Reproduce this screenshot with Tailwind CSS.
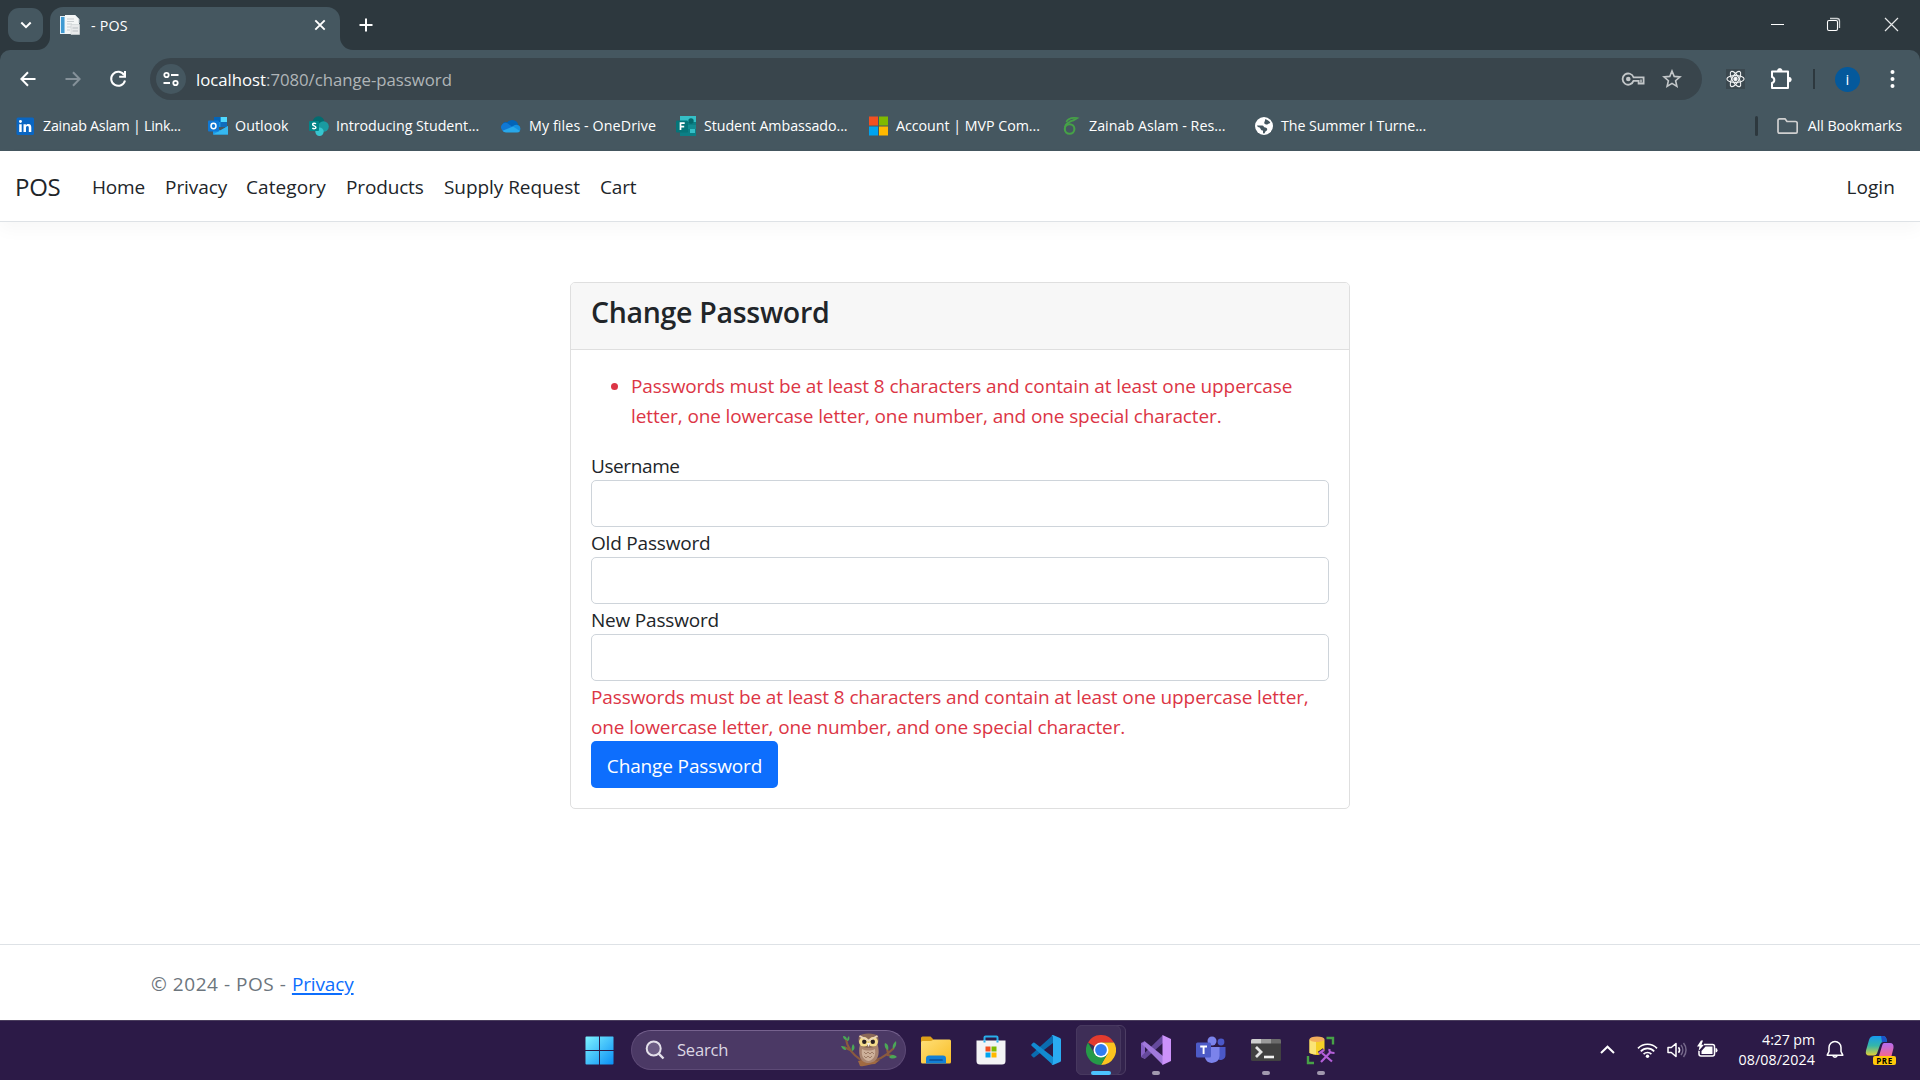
<!DOCTYPE html>
<html lang="en">
<head>
<meta charset="utf-8">
<title>- POS</title>
<script src="https://cdn.jsdelivr.net/npm/@tailwindcss/browser@4"></script>
</head>
<body class="h-[1080px] w-[1920px] overflow-hidden bg-white font-['Open_Sans',sans-serif] text-[#212529]">
<div class="flex h-full flex-col">

<!-- Browser chrome -->
<header class="flex h-[151px] shrink-0 flex-col bg-[#2d383e] text-white">
  <!-- Tab strip -->
  <div class="flex h-[50px] shrink-0 items-start pl-2">
    <button class="mt-2 flex h-[34px] w-[35px] items-center justify-center rounded-[11px] bg-[#455760]">
      <svg class="h-[12px] w-[12px]" viewBox="0 0 12 12" fill="none" stroke="#fff" stroke-width="2"><path d="M1.3 3.5 6 8.2l4.7-4.7"/></svg>
    </button>
    <div class="relative mt-[7px] ml-[7px] flex h-[43px] w-[290px] items-center rounded-t-[13px] bg-[#455760] pr-[13px] pb-[7px] pl-[10px]">
      <svg class="absolute bottom-0 -left-[13px] h-[13px] w-[13px]" viewBox="0 0 13 13"><path d="M13 0v13H0A13 13 0 0 0 13 0Z" fill="#455760"/></svg>
      <svg class="absolute -right-[13px] bottom-0 h-[13px] w-[13px]" viewBox="0 0 13 13"><path d="M0 0v13h13A13 13 0 0 1 0 0Z" fill="#455760"/></svg>
      <svg class="h-5 w-5" viewBox="0 0 20 20"><path d="M0 1h5v18H0Z" fill="#dfeef8"/><path d="M1 2h3.5v16H1Z" fill="#3f9ad2"/><path d="M5 0h10l4 4v15H5Z" fill="#f4f6f6"/><path d="M15 0l4 4v4" fill="none" stroke="#c3cdd2"/><path d="M7 4h7M7 6.5h7M7 9h5M7 12h4M7 15h3" stroke="#c9ced1"/><path d="M11 9.5h8.500v10H11Z" fill="#e8eaeb" stroke="#cfd4d6" stroke-width=".7"/><path d="M12.500 13h5.500M12.500 16h5.500" stroke="#b9bfc3"/></svg>
      <span class="ml-[11px] pt-px text-[14.25px] leading-5 tracking-[0.2px]">- POS</span>
      <svg class="ml-auto h-[14px] w-[14px]" viewBox="0 0 14 14" stroke="#fff" stroke-width="1.900"><path d="M2.300 2.300l9.400 9.400M11.700 2.300l-9.400 9.400"/></svg>
    </div>
    <svg class="mt-[18px] ml-[19px] h-[14px] w-[14px]" viewBox="0 0 14 14" stroke="#fff" stroke-width="2"><path d="M7 .5v13M.5 7h13"/></svg>
    <div class="ml-auto flex items-center pt-[17px] pr-[21px]">
      <svg class="h-[15px] w-[15px]" viewBox="0 0 15 15" stroke="#fff"><path d="M1 7.500h13"/></svg>
      <svg class="ml-[41px] h-[15px] w-[15px]" viewBox="0 0 15 15" fill="none" stroke="#fff" stroke-width="1.100"><rect x="1.500" y="3.500" width="10" height="10" rx="1.500"/><path d="M4 1.500h7A2.500 2.500 0 0 1 13.500 4v7" stroke="#c9cdcf" stroke-width="1.300"/></svg>
      <svg class="ml-[43px] h-[15px] w-[15px]" viewBox="0 0 15 15" stroke="#e6e8e9" stroke-width="1.200"><path d="M1 1l13 13M14 1 1 14"/></svg>
    </div>
  </div>

  <!-- Toolbar -->
  <div class="flex h-[101px] flex-col rounded-t-[10px] bg-[#455760]">
    <div class="flex h-[50px] shrink-0 items-end pl-[20px]">
      <div class="flex h-[42px] items-center">
        <svg class="h-[16px] w-[16px]" viewBox="0 0 16 16" fill="none" stroke="#fff" stroke-width="2"><path d="M15.500 8H1.500M8 1.200 1.400 8 8 14.800"/></svg>
        <svg class="ml-[29px] h-[16px] w-[16px]" viewBox="0 0 16 16" fill="none" stroke="#859199" stroke-width="2"><path d="M.5 8h14M8 1.200 14.600 8 8 14.800"/></svg>
        <svg class="ml-[28px] h-[18px] w-[18px]" viewBox="0 0 18 18" fill="none" stroke="#fff" stroke-width="2"><path d="M15.200 5.200A7 7 0 1 0 16 10.500"/><path d="M16 1v5.800h-5.800"/></svg>
      </div>
      <div class="ml-[23px] flex h-[42px] w-[1552px] items-center rounded-full bg-[#39454c] pr-[20px] pl-[6px]">
        <div class="flex h-[30px] w-[30px] items-center justify-center rounded-full bg-[#455760]">
          <svg class="h-[16px] w-[16px]" viewBox="0 0 16 16" fill="none" stroke="#fff" stroke-width="1.800"><circle cx="3.500" cy="4" r="2.200"/><path d="M8 4h7.500M.5 12H7"/><circle cx="12.500" cy="12" r="2.200"/></svg>
        </div>
        <span class="ml-[10px] pt-px text-[16.75px] tracking-[-0.02px] text-[#b0b5b8]"><span class="text-white">localhost</span>:7080/change-password</span>
        <svg class="ml-auto h-[24px] w-[24px]" viewBox="0 0 24 24" fill="none" stroke="#c3c7c9" stroke-width="1.800"><path d="M12.500 10.300H22.600v6.200H17.600v-2.600h-5.100A5.600 5.600 0 1 1 12.500 10.300Z"/><path d="M20 12.500v3" stroke-width="1.500"/><circle cx="7.300" cy="12" r="2.300" fill="#c3c7c9" stroke="none"/></svg>
        <svg class="ml-[17px] h-[20px] w-[20px]" viewBox="0 0 20 20" fill="none" stroke="#c3c7c9" stroke-width="1.600"><path d="M10 2l2.200 5.400 5.800.5-4.400 3.800 1.300 5.700L10 14.400l-4.900 3 1.300-5.700L2 7.900l5.800-.5Z"/></svg>
      </div>
      <div class="flex h-[42px] items-center pl-[24px]">
        <div class="flex h-[20px] w-[19px] items-center justify-center bg-[#3b484f]">
          <svg class="h-[18px] w-[19px]" viewBox="0 0 19 18" fill="none" stroke="#f0f2f3" stroke-width="1.100"><ellipse cx="9.500" cy="9" rx="8.600" ry="3.400"/><ellipse cx="9.500" cy="9" rx="8.600" ry="3.400" transform="rotate(60 9.500 9)"/><ellipse cx="9.500" cy="9" rx="8.600" ry="3.400" transform="rotate(120 9.500 9)"/><circle cx="9.500" cy="9" r="1.600" fill="#fff"/></svg>
        </div>
        <svg class="ml-[25px] h-[22px] w-[22px]" viewBox="0 0 22 22" fill="none" stroke="#fff" stroke-width="2" stroke-linejoin="round"><path d="M2 3.500h16v16.500H2v-5a3.100 3.100 0 0 0 0-6Z"/><path d="M7.500 2.800a2.300 2.300 0 0 1 4.600 0ZM19 9.300a2.300 2.300 0 0 1 0 4.600Z" fill="#fff" stroke-width=".8"/></svg>
        <div class="ml-[21px] h-[20px] w-[2px] bg-[#2d383e]"></div>
        <div class="ml-[20px] flex h-[25px] w-[25px] items-center justify-center rounded-full bg-[#04599c] text-[15px] leading-none">i</div>
        <svg class="ml-[30px] h-[20px] w-[5px]" viewBox="0 0 5 20" fill="#fff"><circle cx="2.500" cy="3" r="2"/><circle cx="2.500" cy="10" r="2"/><circle cx="2.500" cy="17" r="2"/></svg>
      </div>
    </div>

    <!-- Bookmarks bar -->
    <div class="flex h-[51px] items-center pl-[15px] text-[14.25px] whitespace-nowrap">
      <div class="flex w-[193px] items-center gap-2">
        <svg class="h-5 w-5" viewBox="0 0 20 20"><rect x="1.500" y="1.500" width="17.500" height="17.500" rx="1.500" fill="#0a66c2"/><path d="M4.200 8.200h2.500V16H4.200ZM8.500 8.200h2.400v1.100c.5-.8 1.300-1.300 2.500-1.300 2.300 0 2.900 1.500 2.900 3.600V16h-2.500v-4c0-1-.2-1.900-1.300-1.900s-1.500.8-1.500 1.900v4H8.500Z" fill="#fff"/><circle cx="5.450" cy="5.500" r="1.450" fill="#fff"/></svg>
        <span class="tracking-[-0.237px]">Zainab Aslam | Link...</span>
      </div>
      <div class="flex w-[101px] items-center gap-[7px]">
        <svg class="h-5 w-5" viewBox="0 0 20 20"><path d="M6 1h13v10H6Z" fill="#1490df"/><path d="M12.500 1H19v5h-6.500Z" fill="#50d9ff"/><path d="M12.500 6H19v5h-6.500Z" fill="#0f6cbd"/><path d="M6 1h6.500v5H6Z" fill="#0364b8"/><path d="M5 10l7.500 4.500L20 10v8.500H5Z" fill="#1a9be8"/><path d="M5 18.500 20 10v8.500Z" fill="#35b8f1"/><rect y="4.500" width="11" height="11" rx="1" fill="#0f78d4"/><ellipse cx="5.500" cy="10" rx="2.500" ry="2.700" fill="none" stroke="#fff" stroke-width="1.500"/></svg>
        <span class="tracking-[0.061px]">Outlook</span>
      </div>
      <div class="flex w-[192px] items-center gap-[7px]">
        <svg class="h-5 w-5" viewBox="0 0 20 20"><circle cx="9.500" cy="6" r="5.800" fill="#036c70"/><circle cx="14.500" cy="10.500" r="5.300" fill="#1a9ba1"/><circle cx="10.500" cy="15.800" r="4.200" fill="#37c6d0"/><rect y="5" width="10" height="10" rx="1" fill="#038387"/><path d="M7 7.800C5.800 6.900 3.600 7 3.600 8.500c0 1.700 3.300 1.100 3.300 2.900 0 1.500-2.300 1.600-3.600.7" fill="none" stroke="#fff" stroke-width="1.400"/></svg>
        <span class="tracking-[-0.015px]">Introducing Student...</span>
      </div>
      <div class="flex w-[175px] items-center gap-2">
        <svg class="h-5 w-5" viewBox="0 0 20 20"><path d="M6.300 6.200a6.300 6.300 0 0 1 11 3.200L12 14H4a4 4 0 0 1 2.300-7.800Z" fill="#0364b8"/><path d="M1 14a4.500 4.500 0 0 1 5-7l8 5.500L3 16Z" fill="#1078d4"/><path d="M11.500 10.500a5 5 0 0 1 6-1.200 4 4 0 0 1 .5 6.500L10 14Z" fill="#1490df"/><path d="M1.500 14.700 12 10.500l7 4.500a3.700 3.700 0 0 1-3 1.500H5a4.500 4.500 0 0 1-3.500-1.800Z" fill="#28a8ea"/></svg>
        <span class="tracking-[0.104px]">My files - OneDrive</span>
      </div>
      <div class="flex w-[193px] items-center gap-2">
        <svg class="h-5 w-5" viewBox="0 0 20 20"><path d="M4 0h16v20H4Z" fill="#0b7f85"/><path d="M4 0h16v6H4Z" fill="#35bfc7"/><circle cx="15" cy="5" r="2.700" fill="#04686c"/><path d="M12 9h8v4h-8Z" fill="#128b91"/><path d="M14 13h5v4h-5Z" fill="#35bfc7"/><rect y="4.500" width="12" height="12" rx="1" fill="#057579"/><path d="M4.500 14V7.200h4.200M4.500 10.600h3.700" fill="none" stroke="#fff" stroke-width="1.700"/></svg>
        <span class="tracking-[-0.06px]">Student Ambassado...</span>
      </div>
      <div class="flex w-[192px] items-center gap-[7px]">
        <svg class="h-5 w-5" viewBox="0 0 20 20"><path d="M0 .5h9v9H0Z" fill="#f25022"/><path d="M10 .5h9v9h-9Z" fill="#7fba00"/><path d="M0 10.500h9v9H0Z" fill="#00a4ef"/><path d="M10 10.500h9v9h-9Z" fill="#ffb900"/></svg>
        <span class="tracking-[-0.03px]">Account | MVP Com...</span>
      </div>
      <div class="flex w-[193px] items-center gap-2">
        <svg class="h-5 w-5" viewBox="0 0 20 20" fill="none" stroke="#46a247"><circle cx="8.600" cy="13" r="4.800" stroke-width="2.100"/><path d="M4 11C4.500 6.500 9.500 6 16 2.200 12 1.600 7.500 1.500 5.300 6M8.500 5.500C11 5 13 4.500 15.500 2.500" stroke-width="1.700"/></svg>
        <span class="tracking-[0.022px]">Zainab Aslam - Res...</span>
      </div>
      <div class="flex items-center gap-[7px]">
        <svg class="h-5 w-5" viewBox="0 0 20 20"><circle cx="10" cy="10" r="9" fill="#fff"/><path d="M3 9.500h5.200c1.500 0 1.600 2 3 2s2.200 1 2 2.200-2 1.300-2.200 2.700-2 1.400-2 0v-1.800c-2.500 0-2.300-2.300-3.500-3S3.100 11 3 9.500ZM11 3.300c1.500.2 4 1.200 5.300 3.300-.2 1.300-2.200 1-3 2-1-.1-3-.2-3.100-1.600.2-1.600 1-1.500.8-3.700Z" fill="#455760"/></svg>
        <span class="tracking-[-0.08px]">The Summer I Turne...</span>
      </div>
      <div class="ml-auto flex items-center pr-[18px]">
        <div class="h-[20px] w-[3px] rounded-full bg-[#2d383e]"></div>
        <svg class="ml-[19px] h-[18px] w-[21px]" viewBox="0 0 21 18" fill="none" stroke="#d0d0d0" stroke-width="1.700" stroke-linejoin="round"><path d="M1 3.500Q1 1.800 2.500 1.800H8L10 4.500h8.500q1.700 0 1.700 1.700v8.300q0 1.700-1.700 1.700H2.700Q1 16.200 1 14.500Z"/></svg>
        <span class="ml-[10px] tracking-[-0.05px]">All Bookmarks</span>
      </div>
    </div>
  </div>
</header>

<!-- Page -->
<div class="flex h-[869px] shrink-0 flex-col text-[19px] leading-[30px] tracking-[-0.115px]">
  <nav class="flex h-[71px] shrink-0 items-center border-b border-[#dee2e6] pt-[2px] pr-[25px] pl-[15px] shadow-[0_8px_16px_rgba(0,0,0,0.03)]">
    <a class="mr-[31px] w-[46px] text-[24px] tracking-[-0.3px]">POS</a>
    <div class="flex">
      <a class="w-[73px] tracking-[-0.2px]">Home</a>
      <a class="w-[81px] tracking-[-0.05px]">Privacy</a>
      <a class="w-[100px] tracking-[0.1px]">Category</a>
      <a class="w-[98px] tracking-[-0.15px]">Products</a>
      <a class="w-[156px] tracking-[-0.057px]">Supply Request</a>
      <a class="tracking-[-0.2px]">Cart</a>
    </div>
    <a class="ml-auto tracking-[0.1px]">Login</a>
  </nav>

  <main class="flex grow justify-center pt-[60px]">
    <section class="flex h-[527px] w-[780px] flex-col rounded-[5px] border border-[#dfdfdf] bg-white">
      <div class="rounded-t-[4px] border-b border-[#dfdfdf] bg-[#f7f7f7] px-[20px] pt-[11px] pb-[19px]">
        <h4 class="text-[28.5px] leading-[36px] font-semibold tracking-[-0.3px]">Change Password</h4>
      </div>
      <form class="flex flex-col items-stretch p-[20px]">
        <ul class="mb-[20px] list-disc pl-[40px] text-[#dc3545]">
          <li class="h-[60px] pt-px">Passwords must be at least 8 characters and contain at least one uppercase<br>letter, one lowercase letter, one number, and one special character.</li>
        </ul>
        <label class="h-[30px] pt-px tracking-[-0.4px]">Username</label>
        <input class="h-[47px] rounded-[5px] border border-[#ced4da]">
        <label class="h-[30px] pt-px tracking-[-0.2px]">Old Password</label>
        <input type="password" class="h-[47px] rounded-[5px] border border-[#ced4da]">
        <label class="h-[30px] pt-px tracking-[-0.2px]">New Password</label>
        <input type="password" class="h-[47px] rounded-[5px] border border-[#ced4da]">
        <span class="h-[60px] pt-px text-[#dc3545]">Passwords must be at least 8 characters and contain at least one uppercase letter,<br>one lowercase letter, one number, and one special character.</span>
        <button type="button" class="h-[47px] w-[187px] rounded-[5px] bg-[#0d6efd] pt-[2px] tracking-[-0.14px] text-white">Change Password</button>
      </form>
    </section>
  </main>

  <footer class="flex h-[76px] shrink-0 items-center border-t border-[#dee2e6] pt-[3px] pl-[151px] text-[#6c757d]">
    <p class="whitespace-pre"><span class="tracking-[0.54px]">© 2024 - POS - </span><a class="tracking-[-0.14px] text-[#0d6efd] underline decoration-2 underline-offset-2">Privacy</a></p>
  </footer>
</div>

<!-- Taskbar -->
<div class="flex h-[60px] shrink-0 items-center border-t border-[#4a3d5d] bg-[#2c1a47] text-white">
  <div class="flex items-center pl-[585px]">
    <svg class="h-[29px] w-[29px]" viewBox="0 0 30 30"><defs><linearGradient id="win" x1="0" y1="0" x2="1" y2="1"><stop stop-color="#7df3ff"/><stop offset="1" stop-color="#0a8ff5"/></linearGradient></defs><path d="M1.500.5H14.500V14.500H.5V1.500Q.5.5 1.500.5ZM15.500.5h13.500q.5 0 .5.5v13.500h-14ZM.5 15.500h14v14H1.500q-1 0-1-1ZM15.500 15.500h14v13q0 1-1 1h-13Z" fill="url(#win)"/></svg>
    <div class="mb-px ml-[17px] flex h-[40px] w-[275px] items-center rounded-full border border-[#5d4a76] border-t-[#76628e] bg-[#4b3965] pr-[7px] pl-[13px]">
      <svg class="h-[20px] w-[20px]" viewBox="0 0 20 20" fill="none" stroke="#e4e0ea" stroke-width="2"><circle cx="8.700" cy="8.500" r="7" fill="#6c5c84"/><path d="M13.700 13.700l4.800 4.800" stroke-width="2.400"/></svg>
      <span class="ml-[12px] pt-px text-[16.625px] tracking-[-0.25px] text-[#dcd7e3]">Search</span>
      <svg class="ml-auto h-[34px] w-[57px]" viewBox="0 0 57 34">
        <path d="M5 6C6 16 14 23 20 27 32 31 44 24 53 15M9 17 3 14M46 22l7 1M47 20l-2-8" fill="none" stroke="#8a5a3e" stroke-width="2.200"/>
        <path d="M17 28c7-2 16 1 22-1l-5 4c-5 0-10 3-15 2Z" fill="#a06a42"/>
        <path d="M19 11C17 20 18 30 27.500 30 38 29 39 20 36.500 11Z" fill="#a98570"/>
        <path d="M18 3C21-.5 34-.5 37 3c1.500 6 0 12-9.500 12S16.500 9 18 3Z" fill="#8b6958"/>
        <path d="M21 16c4 2 9 2 13 0 1 6-1 11-6.500 12C22 27 20 22 21 16Z" fill="#cdb09a"/>
        <path d="M23 19l2 2 2-2 2 2 2-2 2 2M23 23l2 2 2-2 2 2 2-2" fill="none" stroke="#93705a" stroke-width=".8"/>
        <circle cx="22.900" cy="8.800" r="4.800" fill="#f4dc8c"/><circle cx="32.200" cy="8.800" r="4.800" fill="#f4dc8c"/>
        <circle cx="23.300" cy="8.800" r="2.200" fill="#2a2023"/><circle cx="31.800" cy="8.800" r="2.200" fill="#2a2023"/>
        <path d="M26 10h3.200l-1.600 4Z" fill="#f3efe6"/><path d="M18.500 3l9 4.500L36.500 3" fill="none" stroke="#ead6bc" stroke-width="1.800"/>
        <path d="M2 3c3 0 4 2 4 4-3 0-4-2-4-4ZM8 3c1 3 0 5-2 5 0-3 1-4 2-5ZM0 13c3 0 5 1 5 4-3 0-4-2-5-4ZM12 11c3 3 1 7-1 7-1-3 0-5 1-7ZM44 10c3 1 4 4 3 7-3-1-4-5-3-7ZM55 8c1 4-1 7-3 8-1-4 1-6 3-8ZM48 24c3-3 6-2 8 0-3 2-6 2-8 0Z" fill="#4ba757"/>
      </svg>
    </div>
  </div>
  <div class="mb-px ml-[2px] flex">
    <!-- File Explorer -->
    <div class="flex h-[58px] w-[55px] items-center justify-center">
      <svg class="h-[30px] w-[30px]" viewBox="0 0 30 30"><defs><linearGradient id="fold" x1="0" y1="0" x2="1" y2="1"><stop stop-color="#ffdf78"/><stop offset="1" stop-color="#f9bd25"/></linearGradient></defs><path d="M0 3q0-1.500 1.500-1.500H9.500L13 5V12H0Z" fill="#dda019"/><path d="M0 7.500Q0 6 1.500 6h8.500l3-1.500H28.500Q30 4.500 30 6v21q0 1.500-1.500 1.500h-27Q0 28.500 0 27Z" fill="url(#fold)"/><path d="M5 28.500v-5Q5 20.500 8 20.500h14q3 0 3 3v5Z" fill="#1380d6"/><path d="M9 25h12" stroke="#0a4d96" stroke-width="1.700" stroke-linecap="round"/></svg>
    </div>
    <!-- Microsoft Store -->
    <div class="flex h-[58px] w-[55px] items-center justify-center">
      <svg class="h-[30px] w-[30px]" viewBox="0 0 30 30"><path d="M8.500 6V2.500q0-1 1-1h11q1 0 1 1V6" fill="none" stroke="#29aeea" stroke-width="2"/><path d="M.5 5.500h29V26q0 3.500-3.500 3.500H4Q.5 29.500.5 26Z" fill="#f3f3f5"/><path d="M8.500 5.500v2M21.500 5.500v2" stroke="#29aeea" stroke-width="2"/><path d="M9.500 11.500h5v5h-5Z" fill="#f25022"/><path d="M15.500 11.500h5v5h-5Z" fill="#7fba00"/><path d="M9.500 17.500h5v5h-5Z" fill="#00a4ef"/><path d="M15.500 17.500h5v5h-5Z" fill="#ffb900"/></svg>
    </div>
    <!-- VS Code -->
    <div class="flex h-[58px] w-[55px] items-center justify-center">
      <svg class="h-[30px] w-[30px]" viewBox="0 0 30 30"><path d="M22 0 .6 19.300Q-.2 20 .6 20.800l1.500 1.500q.7.500 1.500 0L22 8Z" fill="#0a6cb0"/><path d="M22 30 .6 10.700Q-.2 10 .6 9.200L2.100 7.700q.7-.5 1.500 0L22 22Z" fill="#128bd0"/><path d="M22 0 29 3q1 .5 1 1.500v21q0 1-1 1.500l-7 3q-1 .3-1.500-.5 1.500.5 1.500-1.500V2q0-2-1.500-1.500Q21-.3 22 0Z" fill="#2aabf2"/></svg>
    </div>
    <!-- Chrome, active window -->
    <div class="relative flex h-[58px] w-[55px] items-center justify-center">
      <div class="absolute top-[4px] left-[3px] h-[50px] w-[50px] rounded-[6px] border border-[#4c3d63] bg-[#33234d]"></div>
      <div class="absolute top-[4px] left-[3px] h-[50px] w-[45px] rounded-[6px] border border-[#47385f] bg-[#3e2e57]"></div>
      <svg class="relative h-[30px] w-[30px]" viewBox="0 0 30 30"><path d="M15 15 2 7.500A15 15 0 0 1 28 7.500H15Z" fill="#e33b2e"/><path d="M15 7.500h13A15 15 0 0 1 15 30l6.500-11.200Z" fill="#fcc31e"/><path d="M2 7.500A15 15 0 0 0 15 30l6.500-11.200L8.500 18.800Z" fill="#259a48"/><circle cx="15" cy="15" r="7.500" fill="#fff"/><circle cx="15" cy="15" r="5.900" fill="#2f7cf0"/></svg>
      <div class="absolute bottom-[4px] left-[18px] h-[4px] w-[20px] rounded-full bg-[#4cc2ff]"></div>
    </div>
    <!-- Visual Studio -->
    <div class="relative flex h-[58px] w-[55px] items-center justify-center">
      <svg class="h-[30px] w-[30px]" viewBox="0 0 30 30"><path d="M0 8 4 6v18l-4-2Z" fill="#8661c5"/><path d="M4 24 22 8V0L0 21.500Z" fill="#65499c"/><path d="M4 6.500 22 21v9L1 9Z" fill="#a179dc"/><path d="M21.500 0 30 4v22l-8.500 4Z" fill="#cc92fa"/></svg>
      <div class="absolute bottom-[4px] left-[24px] h-[4px] w-[8px] rounded-full bg-[#a198ae]"></div>
    </div>
    <!-- Teams -->
    <div class="flex h-[58px] w-[55px] items-center justify-center">
      <svg class="h-[30px] w-[30px]" viewBox="0 0 30 30"><circle cx="25" cy="7" r="3.400" fill="#4b58c9"/><path d="M19 12h10.500v8a5 5 0 0 1-9 3Z" fill="#4b58c9"/><circle cx="16" cy="6" r="4.500" fill="#7b83eb"/><path d="M9 12h14.500v9a7.500 7.500 0 0 1-14.500 2Z" fill="#7b83eb"/><rect y="7.500" width="15" height="15" rx="1.500" fill="#4d5bc7"/><path d="M4.200 11.500h6.800M7.600 11.500v7.500" stroke="#fff" stroke-width="1.900"/></svg>
    </div>
    <!-- Terminal -->
    <div class="relative flex h-[58px] w-[55px] items-center justify-center">
      <svg class="h-[30px] w-[30px]" viewBox="0 0 30 30"><rect y="4" width="30" height="22" rx="1.500" fill="#414141"/><path d="M0 8.500V5.500Q0 4 1.500 4H10v4.500Z" fill="#cfcfcf"/><path d="M10 4h10v4.500H10Z" fill="#9b9b9b"/><path d="M20 4h8.500Q30 4 30 5.500v3H20Z" fill="#6c6c6c"/><path d="M5 12l5 5-5 5" fill="none" stroke="#e4e4e4" stroke-width="2.800"/><path d="M13 22h10" stroke="#f2f2f2" stroke-width="2.600"/></svg>
      <div class="absolute bottom-[4px] left-[24px] h-[4px] w-[8px] rounded-full bg-[#a198ae]"></div>
    </div>
    <!-- SQL Server Management Studio -->
    <div class="relative flex h-[58px] w-[55px] items-center justify-center">
      <svg class="h-[30px] w-[30px]" viewBox="0 0 30 30"><path d="M3.500 4.500h15V18q-7 4-15 0Z" fill="#f5cf27"/><path d="M3.500 4.500h6.500v15q-4-.2-6.500-1.500Z" fill="#fbe477"/><ellipse cx="11" cy="4.300" rx="7.500" ry="2.800" fill="#f2ad5c"/><path d="M20.500 3h6.500v6.500M8 28H2v-7" fill="none" stroke="#47a147" stroke-width="2.400"/><path d="M15 27 25 16.500M16 18l10 8.500M13 18.500l5-3.500" fill="none" stroke="#2c1a47" stroke-width="4"/><path d="M15 27 25 16.500M16 18l10 8.500M13 18.500l5-3.500M23.500 14q-1 4 5 4" fill="none" stroke="#b35fd8" stroke-width="2.200"/></svg>
      <div class="absolute bottom-[4px] left-[24px] h-[4px] w-[8px] rounded-full bg-[#a198ae]"></div>
    </div>
  </div>
  <!-- System tray -->
  <div class="mb-px ml-auto flex items-center pr-[24px]">
    <svg class="h-[10px] w-[15px]" viewBox="0 0 15 10" fill="none" stroke="#fff" stroke-width="2"><path d="M1 8 7.500 1.700 14 8"/></svg>
    <svg class="ml-[22px] h-[20px] w-[21px]" viewBox="0 0 21 20" fill="none" stroke="#fff" stroke-width="1.700"><path d="M1 8.300a13.200 13.200 0 0 1 19 0M3.800 11.300a9.300 9.300 0 0 1 13.400 0M6.600 14.100a5.500 5.500 0 0 1 7.800 0"/><circle cx="10.500" cy="16.300" r="1.700" fill="#fff" stroke="none"/></svg>
    <svg class="ml-[9px] h-[20px] w-[20px]" viewBox="0 0 20 20" fill="none" stroke="#fff" stroke-width="1.500"><path d="M1 7.500h3.300L9 3.500v13l-4.700-4H1Z" stroke-linejoin="round"/><path d="M11.500 7.200a4.500 4.500 0 0 1 0 5.600"/><path d="M14 5a8 8 0 0 1 0 10M16.500 3a11 11 0 0 1 0 14" stroke="#75688a"/></svg>
    <svg class="ml-[10px] h-[20px] w-[21px]" viewBox="0 0 21 20"><path d="M7 4.500h8.500q2 0 2 2V14q0 2-2 2H4q-2 0-2-2v-3" fill="none" stroke="#fff" stroke-width="1.500"/><path d="M8.500 6.500h7v7.500H4.500v-3Z" fill="#fff"/><path d="M18.500 8q2 0 2 2.200t-2 2.200Z" fill="#fff"/><path d="M4 .5 0 6.500h2.500L1.500 11 7 4.700H4.500L6 .5Z" fill="#fff"/></svg>
    <div class="ml-[20px] flex w-[77px] flex-col items-end text-[14.25px] leading-[20px]">
      <span class="tracking-[-0.13px]">4:27 pm</span><span class="tracking-[0.08px]">08/08/2024</span>
    </div>
    <svg class="ml-[11px] h-[20px] w-[18px]" viewBox="0 0 18 20" fill="none" stroke="#fff" stroke-width="1.500" stroke-linejoin="round"><path d="M9 1.500a6 6 0 0 0-6 6v4L1.200 15.200h15.600L15 11.500v-4a6 6 0 0 0-6-6ZM6.800 15.500a2.300 2.300 0 0 0 4.400 0"/></svg>
    <div class="relative ml-[21px] h-[30px] w-[31px]">
      <svg class="h-[30px] w-[31px]" viewBox="0 0 31 30"><defs><linearGradient id="cpa" x1="0" y1="0" x2="0" y2="1"><stop stop-color="#169af0"/><stop offset=".5" stop-color="#35b6a8"/><stop offset="1" stop-color="#e3ce35"/></linearGradient><linearGradient id="cpb" x1="0" y1="0" x2="0" y2="1"><stop stop-color="#b66cf0"/><stop offset="1" stop-color="#f4668f"/></linearGradient></defs><path d="M9 1h9.500q2 0 2.800 2.500L22 7h-4q-2 0-3 3l-3 8.500q-.8 2-3 2H4q-4 0-3-5L4 5q1.200-4 5-4Z" fill="url(#cpa)"/><path d="M16 1h2.500q2 0 2.800 2.500L22 7h-5Z" fill="#1b55c9"/><path d="M19 8h6q4 0 3.500 5l-2 8H14l3-10q.7-3 2-3Z" fill="url(#cpb)"/></svg>
      <span class="absolute right-0 bottom-0 flex h-[9px] w-[23px] items-center justify-center rounded-[2px] bg-[#ffc80a] text-[8px] leading-none font-bold tracking-[0.5px] text-black">PRE</span>
    </div>
  </div>
</div>

</div>
</body>
</html>
